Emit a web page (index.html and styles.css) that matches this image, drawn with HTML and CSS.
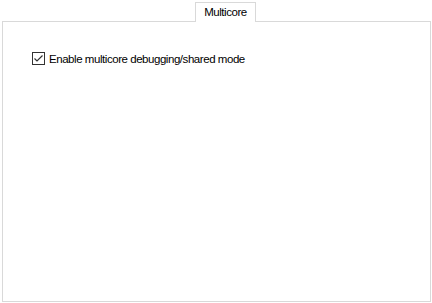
FILE: index.html
```html
<!DOCTYPE html>
<html>
<head>
    <title>Multicore</title>
    <link rel="stylesheet" href="styles.css">
</head>
<body>
    <div class="tabs">
        <div class="tab">Multicore</div>
    </div>
    <div class="panel">
        <label class="check">
            <svg class="box" width="13" height="13" viewBox="0 0 13 13">
                <rect x="0.5" y="0.5" width="12" height="12" fill="#fff" stroke="#333"/>
                <path d="M2.5 6.5 L5 9 L10.5 3.5" fill="none" stroke="#333" stroke-width="1.2"/>
            </svg>
            <span>Enable multicore debugging/shared mode</span>
        </label>
    </div>
</body>
</html>
```

FILE: styles.css
```css
body {
    margin: 0;
    background: #fff;
    font-family: 'Liberation Sans', Arial, sans-serif;
    font-size: 11.5px;
    letter-spacing: -0.45px;
    color: #000;
}

.tabs {
    display: flex;
    height: 21px;
    padding-left: 195px;
    box-sizing: border-box;
}

.tab {
    margin-top: 2px;
    width: 61px;
    height: 20px;
    box-sizing: border-box;
    border: 1px solid #d9d9d9;
    border-bottom: none;
    background: #fff;
    text-align: center;
    line-height: 18px;
    position: relative;
    z-index: 1;
}

.panel {
    margin-left: 2px;
    width: 429px;
    height: 281px;
    box-sizing: border-box;
    border: 1px solid #d9d9d9;
    padding: 30px 0 0 29px;
}

.check {
    display: flex;
    align-items: center;
    gap: 4px;
}

.box {
    display: block;
}
```
